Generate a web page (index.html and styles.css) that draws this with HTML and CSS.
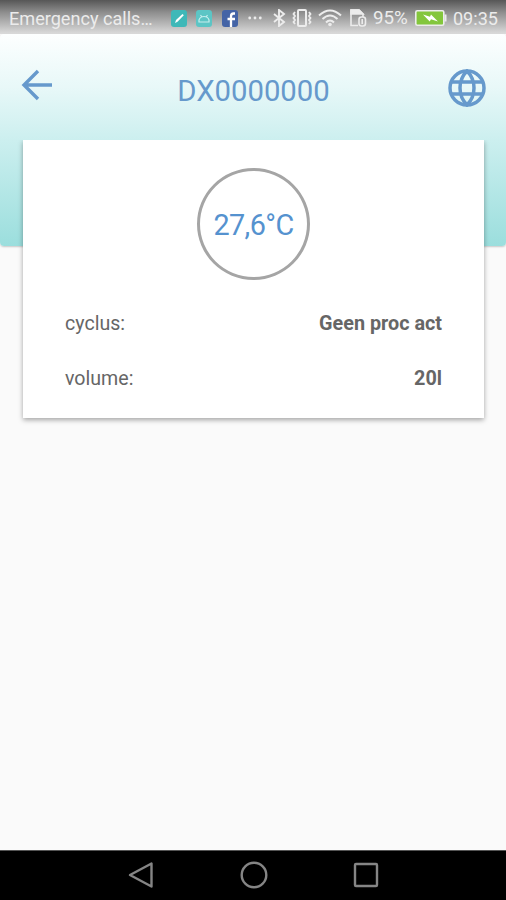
FILE: index.html
```html
<!DOCTYPE html>
<html lang="nl">
<head>
    <meta charset="UTF-8">
    <meta name="viewport" content="width=device-width, initial-scale=1.0">
    <title>DX0000000</title>
    <link rel="stylesheet" href="styles.css">
</head>
<body>
    <div class="status-bar">
        <span class="carrier">Emergency calls…</span>
        <div class="status-icons">
            <svg width="16" height="17" viewBox="0 0 16 17">
                <rect width="16" height="17" rx="3" fill="#3fb8b8"/>
                <path d="M4 13l1-3 6.500-6 1.300 1.300-6.300 6.500z" fill="#fff"/>
            </svg>
            <svg class="app-android" width="16" height="17" viewBox="0 0 16 17">
                <rect width="16" height="17" rx="3" fill="#5cc5c5"/>
                <path d="M3 12V10q1-3.500 5-3.500t5 3.500v2zM4.500 5l1.500 2M11.500 5L10 7" fill="none" stroke="#c5eeee" stroke-width="1.200"/>
            </svg>
            <svg class="app-facebook" width="16" height="17" viewBox="0 0 16 17">
                <rect width="16" height="17" rx="3" fill="#4464a6"/>
                <path d="M13 3.500h-1.500q-2.500 0-2.500 2.700V17M5.500 9H13" fill="none" stroke="#fff" stroke-width="2.300"/>
            </svg>
            <svg class="more" width="14" height="4" viewBox="0 0 14 4" fill="#ececec">
                <circle cx="1.700" cy="2" r="1.400"/><circle cx="7" cy="2" r="1.400"/><circle cx="12.300" cy="2" r="1.400"/>
            </svg>
            <svg class="bluetooth" width="13" height="18" viewBox="0 0 13 18" fill="none" stroke="#ececec" stroke-width="1.900">
                <path d="M1 5l10 8-5 4V1l5 4-10 8"/>
            </svg>
            <svg class="vibrate" width="20" height="18" viewBox="0 0 20 18" fill="none" stroke="#ececec">
                <rect x="6" y="1" width="8" height="16" rx="1" stroke-width="2"/>
                <path d="M3 3l-1.500 2L3 7 1.500 9 3 11l-1.500 2L3 15M17 3l1.500 2L17 7l1.500 2-1.500 2 1.500 2-1.500 2" stroke-width="1.800"/>
            </svg>
            <svg class="wifi" width="24" height="18" viewBox="0 0 24 18" fill="none" stroke="#ececec" stroke-width="2">
                <path d="M1 6.500q11-10 22 0M4.500 10q7.500-7 15 0M8 13.500q4-4 8 0"/>
                <circle cx="12" cy="15.500" r="1.800" fill="#ececec" stroke="none"/>
            </svg>
            <svg class="sim" width="17" height="18" viewBox="0 0 17 18" fill="none" stroke="#ececec" stroke-width="1.600">
                <path d="M8 16.500H1V1h8l4 4v3"/>
                <path d="M1 1h8l4 4H1z" fill="#ececec"/>
                <rect x="9" y="8" width="6.500" height="9" rx="2.500"/>
                <path d="M12.200 10v5"/>
            </svg>
        </div>
        <span class="percent">95%</span>
        <svg class="battery" width="32" height="16" viewBox="0 0 32 16">
            <rect x=".8" y=".8" width="28" height="14.400" rx="1.500" fill="#83c63c" stroke="#ececec" stroke-width="1.600"/>
            <path d="M30.500 4.500v7" stroke="#ececec" stroke-width="2"/>
            <path d="M8 4.500l7 2.200 1-2.200 7 7-7-2.300-1.300 2.300z" fill="#fff"/>
        </svg>
        <span class="clock">09:35</span>
    </div>

    <main class="screen">
        <header class="header">
            <svg class="back" width="32" height="32" viewBox="0 0 32 32" fill="none" stroke="#6699cc" stroke-width="3.400">
                <path d="M31 16H3M17 2L3 16l14 14"/>
            </svg>
            <h1 class="title">DX0000000</h1>
            <svg class="globe" width="38" height="38" viewBox="0 0 38 38" fill="none" stroke="#6699cc" stroke-width="3.500">
                <circle cx="19" cy="19" r="17"/>
                <path d="M19 2q-7 7-7 17t7 17q7-7 7-17T19 2zM3.500 13h31M3.500 25h31"/>
            </svg>
        </header>

        <section class="card">
            <div class="temperature">27,6°C</div>
            <div class="row">
                <span>cyclus:</span>
                <span class="value">Geen proc act</span>
            </div>
            <div class="row">
                <span>volume:</span>
                <span class="value">20l</span>
            </div>
        </section>
    </main>

    <nav class="nav-bar">
        <svg width="26" height="28" viewBox="0 0 26 28"><path d="M23.500 2.500v23L2 14z"/></svg>
        <svg width="28" height="28" viewBox="0 0 28 28"><circle cx="14" cy="14" r="12.300"/></svg>
        <svg width="26" height="26" viewBox="0 0 26 26"><rect x="2" y="2" width="22" height="22" rx="1"/></svg>
    </nav>
</body>
</html>
```
FILE: styles.css
```css
* {
    box-sizing: border-box;
}

body {
    display: flex;
    flex-direction: column;
    height: 900px;
    margin: 0;
    overflow: hidden;
    background-color: #fafafa;
    font-family: Roboto, sans-serif;
    color: #666;
}

svg {
    display: block;
    flex-shrink: 0;
}

/* Android status bar */
.status-bar {
    display: flex;
    align-items: center;
    flex-shrink: 0;
    height: 34px;
    padding: 2px 8px 0 9px;
    background: linear-gradient(#565656, #8c8c8c 35%, #dcdcdc);
    color: #ececec;
    font-size: 18.1px;
    white-space: nowrap;
}

.carrier {
    width: 162px;
}

.status-icons {
    display: flex;
    align-items: center;
}

.app-android {
    margin-left: 9px;
}

.app-facebook,
.more {
    margin-left: 10px;
}

.bluetooth {
    margin-left: 11px;
}

.vibrate,
.wifi {
    margin-left: 6px;
}

.sim {
    margin-left: 8px;
}

.percent {
    width: 36px;
    margin-left: 6px;
    font-size: 18.8px;
}

.battery {
    margin-left: 6px;
}

.clock {
    margin-left: auto;
}

/* Page */
.screen {
    flex: 1;
    padding: 0 22px 0 23px;
}

.screen::before {
    content: "";
    display: block;
    height: 212px;
    margin: 0 -22px -212px -23px;
    border-radius: 4px;
    background: linear-gradient(#fdffff, #e8f8f8 25%, #ccefef 50%, #9bdedd);
    box-shadow: 0 1px 2px rgba(0, 0, 0, 0.2);
}

.header {
    display: flex;
    align-items: center;
    justify-content: space-between;
    height: 106px;
    margin: 0 -22px 0 -23px;
    padding: 2px 20px 0 21px;
}

.back {
    margin-top: -6px;
}

.title {
    margin: 6px 0 0 6px;
    color: #6699cc;
    font-size: 29.3px;
    font-weight: 400;
}

/* the shadow stops at the header edge */
.card {
    height: 278px;
    padding: 28px 42px 0;
    background-color: #fff;
    box-shadow: 0 2px 5px rgba(0, 0, 0, 0.35);
    clip-path: inset(0 -10px -10px);
}

.temperature {
    display: flex;
    align-items: center;
    justify-content: center;
    width: 113px;
    height: 112px;
    margin: 0 auto 16px;
    padding-top: 1px;
    border: 3px solid #a5a5a5;
    border-radius: 50%;
    color: #5592cf;
    font-size: 28.8px;
    letter-spacing: -0.6px;
}

.row {
    display: flex;
    align-items: center;
    justify-content: space-between;
    height: 55px;
    font-size: 19.6px;
}

.value {
    font-size: 19.8px;
    font-weight: 700;
}

/* Android navigation bar */
.nav-bar {
    display: flex;
    align-items: center;
    justify-content: space-between;
    flex-shrink: 0;
    height: 50px;
    padding: 0 127px 2px 128px;
    border-top: 1px solid #555;
    background-color: #000;
    fill: none;
    stroke: #858585;
    stroke-width: 2.4;
    stroke-linejoin: round;
}
```
